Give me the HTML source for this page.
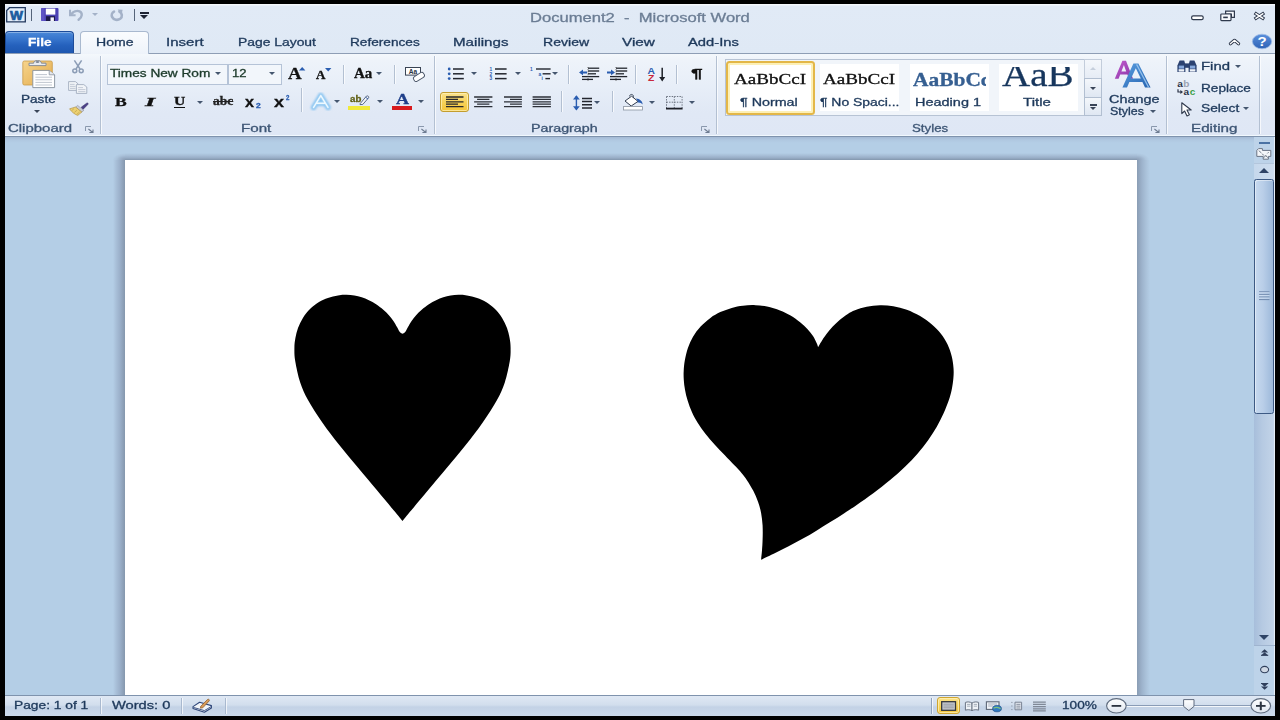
<!DOCTYPE html>
<html><head><meta charset="utf-8"><title>Document2 - Microsoft Word</title>
<style>
html,body{margin:0;padding:0;background:#000;}
body{width:1280px;height:720px;overflow:hidden;position:relative;font-family:"Liberation Sans",sans-serif;}
#win{position:absolute;left:0;top:0;width:1280px;height:720px;background:#dde8f5;overflow:hidden;}
.abs,.t,svg.i{position:absolute;}
svg.i{overflow:visible;}
.t{z-index:5;white-space:nowrap;line-height:1;transform-origin:0 50%;color:#1e395b;font-size:11px;-webkit-text-stroke:.3px currentColor;}
.serif{font-family:"Liberation Serif",serif;}
#titlebar{left:0;top:0;width:1280px;height:54px;background:linear-gradient(#f4f8fc 0,#f4f8fc 5px,#e1eaf6 6px,#dfe9f5 54px);}
#ribbon{left:0;top:53px;width:1280px;height:83px;background:linear-gradient(#f4f8fc 0,#eef3fa 8%,#e7eef8 40%,#e0e8f5 72%,#dfe7f5 100%);border-top:1px solid #8e9eb5;box-sizing:border-box;box-shadow:inset 0 -1px 0 #f1f8fe;}
#ribbonline{left:0;top:136px;width:1280px;height:1px;background:#7f93ad;}
#doc{left:0;top:137px;width:1280px;height:558px;background:linear-gradient(#a4b9d4 0,#b0c8e1 3px,#b4cee6 6px);}
#page{left:125px;top:160px;width:1012.3px;height:540px;background:#fff;}
.shl{left:112.5px;top:160px;width:12.5px;height:535px;background:linear-gradient(90deg,#b4cee6 0,#a9c0d9 25%,#9bb0ca 58%,#8597ad 100%);}
.shr{left:1137.3px;top:160px;width:12.5px;height:535px;background:linear-gradient(270deg,#b4cee6 0,#aac2da 30%,#9db3cc 62%,#8a9db4 100%);}
.sht{left:125px;top:153px;width:1012.3px;height:7px;background:linear-gradient(180deg,#b4cee6 0,#a7bed7 35%,#98adc6 70%,#8397ad 100%);}
.shc1{left:112.5px;top:153px;width:12.5px;height:7px;background:radial-gradient(ellipse 12.5px 7px at 100% 100%,#8a9db4 0,#9db2cb 40%,#acc4dc 70%,#b4cee6 100%);}
.shc2{left:1137.3px;top:153px;width:12.5px;height:7px;background:radial-gradient(ellipse 12.5px 7px at 0 100%,#8a9db4 0,#9db2cb 40%,#acc4dc 70%,#b4cee6 100%);}
#status{left:0;top:695px;width:1280px;height:21px;background:linear-gradient(#dfe8f4 0,#d2deed 45%,#c3d2e6 55%,#cbd9ea 100%);border-top:1px solid #7f93ad;box-sizing:border-box;}
.vsep{position:absolute;width:1px;background:#b3c0d2;box-shadow:1px 0 0 rgba(255,255,255,.7);}
.arr{position:absolute;width:0;height:0;border-left:3.3px solid transparent;border-right:3.3px solid transparent;border-top:3.3px solid #45566f;margin-left:-.3px;}
.bk{position:absolute;background:#000;}
</style></head><body>
<div id="win">
<div class="abs" id="titlebar"></div>
<!-- File tab -->
<div class="abs" style="left:5px;top:31px;width:69px;height:23px;border-radius:4px 4px 0 0;background:linear-gradient(#4a88d8 0,#3573cb 35%,#2561bd 60%,#1d56ae 100%);border:1px solid #1c4c9a;border-bottom:none;box-sizing:border-box;box-shadow:inset 0 1px 0 rgba(255,255,255,.35)"></div>
<!-- Home tab -->
<div class="abs" style="left:80px;top:31px;width:69px;height:23px;border-radius:4px 4px 0 0;background:linear-gradient(#fafcfe,#eef3fa);border:1px solid #a9b9cf;border-bottom:none;box-sizing:border-box;z-index:2"></div>
<!-- QAT: Word icon -->
<svg class="i" style="left:6px;top:6.5px" width="20" height="15.5" viewBox="0 0 20 15.5">
<path d="M3.5 .7H19.3V14.8H.7V3.5Z" fill="#e4eefa" stroke="#22395e" stroke-width="1.3"/>
<text x="10.4" y="12.6" font-family="Liberation Sans" font-weight="bold" font-size="12.5" text-anchor="middle" fill="#1c5c9e" stroke="#1c5c9e" stroke-width=".7" transform="translate(10.4 0) scale(1.1 1) translate(-10.4 0)">W</text>
</svg>
<div class="abs" style="left:31px;top:9px;width:1px;height:12px;background:#55647a"></div>
<!-- Save -->
<svg class="i" style="left:41px;top:8px" width="17.5" height="13" viewBox="0 0 17.5 13">
<rect x="0" y="0" width="17.5" height="13" rx="1" fill="#4d42b4"/>
<rect x="0" y="0" width="3.5" height="13" fill="#6a5fd0" opacity=".6"/>
<rect x="4.8" y=".6" width="9.5" height="6" fill="#fff"/>
<rect x="5" y="8.2" width="9" height="4.8" fill="#1d1a4a"/>
<rect x="9.5" y="9.4" width="3.4" height="3.6" fill="#f4f4fa"/>
</svg>
<!-- Undo (disabled) -->
<svg class="i" style="left:69px;top:8.5px" width="15" height="12" viewBox="0 0 15 12">
<path d="M1 .8V6.2H6.6" fill="none" stroke="#a4b2c8" stroke-width="2"/>
<path d="M2 5.4C4.2 2.6 7.8 1.2 10.6 2.4C13.6 3.8 13.6 8 9.6 10.8" fill="none" stroke="#a4b2c8" stroke-width="2.4" stroke-linecap="round"/>
</svg>
<div class="arr" style="left:92px;top:13px;border-top-color:#a4b2c8"></div>
<!-- Redo (disabled) -->
<svg class="i" style="left:109px;top:8.5px" width="16" height="12" viewBox="0 0 16 12">
<path d="M10.4 2.6C13.2 4 13.8 7.8 11.2 9.8C8.6 11.6 4.6 11 3.2 8.2C2.2 6 3 3.6 5 2.6" fill="none" stroke="#a4b2c8" stroke-width="2.6" stroke-linecap="round"/>
<path d="M8.6 .4L13.6 .8L12.6 5.4Z" fill="#a4b2c8"/>
</svg>
<div class="abs" style="left:134px;top:9px;width:1px;height:12px;background:#55647a"></div>
<!-- Customize QAT -->
<div class="abs" style="left:140px;top:12px;width:9px;height:1.6px;background:#1d2333"></div>
<div class="abs" style="left:140px;top:14.6px;width:0;height:0;border-left:4.5px solid transparent;border-right:4.5px solid transparent;border-top:4px solid #1d2333"></div>
<!-- Window controls -->
<svg class="i" style="left:1190px;top:10px" width="80" height="12" viewBox="0 0 80 12">
<rect x="1.6" y="5.8" width="11.6" height="3.8" rx="1.6" fill="#fff" stroke="#2f394c" stroke-width="1.2"/>
<g fill="#f7f9fc" stroke="#2f394c" stroke-width="1.2">
<path d="M35.6 1.2H44.4V7.4H41.4V4H35.6Z"/>
<rect x="30.8" y="4" width="10.2" height="6.6" rx=".8"/>
<rect x="33.2" y="6.6" width="4.6" height="1.6" fill="#2f394c" stroke="none"/>
</g>
<path d="M64.6 2.9L74.2 9.1M74.2 2.9L64.6 9.1" stroke="#2f394c" stroke-width="3.5" fill="none"/><path d="M65.4 3.4L73.4 8.6M73.4 3.4L65.4 8.6" stroke="#fff" stroke-width="1.5" fill="none"/>
</svg>
<!-- collapse ribbon chevron -->
<svg class="i" style="left:1228px;top:38px" width="13" height="8" viewBox="0 0 13 8">
<path d="M2.4 5.8L6.5 2.3L10.6 5.8" stroke="#2f394c" stroke-width="3.2" stroke-linecap="round" stroke-linejoin="round" fill="none"/><path d="M2.4 5.8L6.5 2.3L10.6 5.8" stroke="#fff" stroke-width="1.3" stroke-linecap="round" stroke-linejoin="round" fill="none"/>
</svg>
<!-- help -->
<svg class="i" style="left:1251.5px;top:34px" width="20" height="15" viewBox="0 0 20 15">
<defs><linearGradient id="hg" x1="0" y1="0" x2="0" y2="1"><stop offset="0" stop-color="#5a90dc"/><stop offset="1" stop-color="#2d62b6"/></linearGradient></defs>
<ellipse cx="10" cy="7.5" rx="9.6" ry="7.3" fill="url(#hg)" stroke="#9fbde6" stroke-width=".8"/>
<text x="10" y="12" font-family="Liberation Sans" font-weight="bold" font-size="12.5" text-anchor="middle" fill="#fff" transform="translate(10 0) scale(1.2 1) translate(-10 0)">?</text>
</svg>

<div class="abs" id="ribbon"></div>
<div class="abs" id="ribbonline"></div>
<div class="abs" id="doc"></div>
<div class="abs shl"></div><div class="abs shr"></div><div class="abs sht"></div><div class="abs shc1"></div><div class="abs shc2"></div>
<div class="abs" id="page"></div>
<svg class="i" style="left:0;top:0" width="1280" height="720" viewBox="0 0 1280 720">
<path fill="#000" d="M402.5 521.0 C400.7 518.8 396.0 513.0 391.7 507.9 C387.4 502.7 382.4 496.7 376.8 490.0 C371.2 483.3 364.1 475.1 357.9 467.6 C351.6 460.1 345.2 452.5 339.3 445.0 C333.4 437.5 327.5 430.0 322.3 422.5 C317.1 415.1 311.7 406.8 308.0 400.1 C304.4 393.4 302.4 388.9 300.2 382.4 C298.1 375.9 296.2 366.8 295.2 361.0 C294.2 355.3 294.4 351.9 294.4 348.0 C294.4 344.2 294.8 341.3 295.4 338.0 C296.0 334.6 296.8 331.3 298.0 328.0 C299.3 324.6 300.9 321.1 302.9 317.9 C304.9 314.8 307.3 311.7 310.0 309.0 C312.7 306.4 316.0 303.9 319.0 302.0 C322.0 300.2 324.8 299.0 327.9 297.9 C331.1 296.8 334.9 295.9 338.0 295.4 C341.1 294.9 343.8 294.8 346.5 294.8 C349.2 294.8 351.9 295.1 354.4 295.5 C356.9 295.9 359.3 296.6 361.7 297.3 C364.1 298.1 366.5 299.1 368.9 300.2 C371.3 301.4 373.7 302.6 376.1 304.2 C378.5 305.8 381.2 307.8 383.3 309.7 C385.5 311.5 387.4 313.5 389.1 315.4 C390.8 317.3 392.1 319.0 393.4 320.9 C394.7 322.8 396.0 325.3 397.0 327.0 C398.0 328.7 398.8 330.6 399.2 331.3 Q402.5 336 405.8 331.3 C406.2 330.6 407.0 328.7 408.0 327.0 C409.0 325.3 410.3 322.8 411.6 320.9 C412.9 319.0 414.2 317.3 415.9 315.4 C417.6 313.5 419.5 311.5 421.7 309.7 C423.8 307.8 426.5 305.8 428.9 304.2 C431.3 302.6 433.7 301.4 436.1 300.2 C438.5 299.1 440.9 298.1 443.3 297.3 C445.7 296.6 448.1 295.9 450.6 295.5 C453.1 295.1 455.8 294.8 458.5 294.8 C461.2 294.8 463.9 294.9 467.0 295.4 C470.1 295.9 473.9 296.8 477.1 297.9 C480.2 299.0 483.0 300.2 486.0 302.0 C489.0 303.9 492.3 306.4 495.0 309.0 C497.7 311.7 500.1 314.8 502.1 317.9 C504.1 321.1 505.7 324.6 507.0 328.0 C508.2 331.3 509.0 334.6 509.6 338.0 C510.2 341.3 510.6 344.2 510.6 348.0 C510.6 351.9 510.8 355.3 509.8 361.0 C508.8 366.8 506.9 375.9 504.8 382.4 C502.6 388.9 500.6 393.4 497.0 400.1 C493.3 406.8 487.9 415.1 482.7 422.5 C477.5 430.0 471.6 437.5 465.7 445.0 C459.8 452.5 453.4 460.1 447.1 467.6 C440.9 475.1 433.8 483.3 428.2 490.0 C422.6 496.7 417.6 502.7 413.3 507.9 C409.0 513.0 404.3 518.8 402.5 521.0Z"/>
<path fill="#000" d="M761.1 559.8 C761.2 558.3 761.7 554.0 762.0 550.6 C762.2 547.2 762.5 543.6 762.6 539.4 C762.8 535.2 762.8 530.0 762.6 525.6 C762.3 521.2 761.8 516.9 761.1 513.0 C760.4 509.1 759.4 505.7 758.1 502.0 C756.8 498.3 755.1 494.4 753.3 490.8 C751.4 487.2 749.0 483.3 747.1 480.4 C745.1 477.4 743.6 475.6 741.5 473.0 C739.4 470.5 737.3 468.3 734.4 465.3 C731.6 462.3 727.8 458.5 724.6 455.0 C721.3 451.6 718.0 448.3 714.8 444.7 C711.6 441.1 708.1 437.2 705.2 433.4 C702.4 429.7 699.7 426.0 697.5 422.4 C695.2 418.9 693.5 415.6 691.9 412.0 C690.3 408.5 688.8 404.6 687.7 400.8 C686.5 397.1 685.6 393.2 685.0 389.7 C684.3 386.2 684.0 383.1 683.8 380.0 C683.6 376.9 683.5 374.2 683.7 371.0 C683.9 367.7 684.1 364.3 684.8 360.4 C685.5 356.6 686.6 351.9 687.9 347.9 C689.3 344.0 690.9 340.3 693.0 336.7 C695.1 333.2 697.5 329.8 700.4 326.7 C703.3 323.6 707.1 320.4 710.4 317.9 C713.7 315.5 716.8 313.8 720.3 312.1 C723.9 310.4 727.9 309.0 731.7 307.9 C735.5 306.8 739.0 306.1 743.0 305.7 C746.9 305.2 751.5 305.0 755.5 305.2 C759.5 305.4 762.9 305.7 767.0 306.6 C771.1 307.5 776.2 309.0 780.0 310.5 C783.8 311.9 786.7 313.4 790.1 315.3 C793.4 317.3 797.2 319.9 800.1 322.2 C803.0 324.5 805.5 326.8 807.6 329.2 C809.8 331.5 811.5 333.8 813.0 336.1 C814.5 338.5 815.8 341.2 816.6 343.1 C817.5 344.9 817.9 346.6 818.1 347.3 C818.6 346.4 819.9 343.9 821.3 341.8 C822.6 339.6 824.4 336.8 826.3 334.3 C828.2 331.8 830.2 329.2 832.5 326.8 C834.8 324.4 837.4 321.9 839.9 319.8 C842.5 317.7 845.3 315.6 847.8 314.0 C850.4 312.4 851.9 311.5 855.0 310.3 C858.2 309.1 862.6 307.6 866.7 306.8 C870.9 305.9 875.6 305.3 880.0 305.2 C884.4 305.1 888.9 305.4 893.3 306.2 C897.8 306.9 902.3 308.2 906.8 309.8 C911.2 311.5 915.9 313.7 920.1 316.1 C924.3 318.6 928.5 321.5 931.9 324.5 C935.4 327.4 938.2 330.4 940.9 333.8 C943.5 337.1 945.8 340.9 947.6 344.6 C949.4 348.4 950.7 352.4 951.7 356.3 C952.7 360.1 953.2 364.3 953.5 368.0 C953.8 371.6 953.7 374.4 953.4 378.0 C953.1 381.6 952.5 385.9 951.7 389.7 C950.9 393.5 950.1 396.6 948.7 400.6 C947.3 404.5 945.5 409.2 943.5 413.6 C941.5 418.0 939.3 422.4 936.8 426.8 C934.2 431.2 931.5 435.5 928.3 440.0 C925.1 444.4 921.5 449.0 917.7 453.4 C913.8 457.9 909.6 462.3 905.0 466.7 C900.4 471.2 895.4 475.7 890.1 480.1 C884.8 484.5 878.9 489.1 873.3 493.3 C867.7 497.4 861.5 501.7 856.7 505.0 C851.9 508.3 848.7 510.4 844.3 513.2 C839.9 516.1 835.0 519.2 830.3 522.1 C825.7 525.0 821.0 527.9 816.4 530.7 C811.8 533.5 807.2 536.2 802.5 538.8 C797.9 541.4 793.2 543.9 788.6 546.3 C783.9 548.8 779.3 551.1 774.7 553.3 C770.1 555.5 763.4 558.7 761.1 559.8Z"/>
</svg>

<!-- vertical scrollbar column -->
<div class="abs" style="left:1254px;top:137px;width:21px;height:558px;background:#bdd3e9"></div>
<div class="abs" style="left:1259px;top:142px;width:10.6px;height:1.8px;background:#4a72a4"></div>
<!-- view ruler icon -->
<svg class="i" style="left:1256px;top:147.5px" width="15.5" height="12" viewBox="0 0 15.5 12">
<path d="M.8 2.4L2.6 .6H6.4V2.4H14.8V8.4H12.4V11.2H7.2V8.4H.8Z" fill="#f4f6f9" stroke="#6a7484" stroke-width="1"/>
<path d="M3 2.6L5 4.8M6 5.6L8 7.6M8 9.6L9.8 7.4L11.6 9.6M11.4 5.4L12.6 4.2" fill="none" stroke="#5a6474" stroke-width=".9"/>
</svg>
<!-- up button -->
<div class="abs" style="left:1254px;top:162.5px;width:21px;height:16px;background:linear-gradient(90deg,#c6d8ec,#cfdeef);border-top:1px solid #b3c6dc;box-sizing:border-box"></div>
<div class="abs" style="left:1259px;top:167.8px;width:0;height:0;border-left:5.5px solid transparent;border-right:5.5px solid transparent;border-bottom:5px solid #2f4466"></div>
<!-- track -->
<div class="abs" style="left:1254px;top:178.5px;width:20.6px;height:467px;background:linear-gradient(90deg,#a7bedb 0,#b6cae2 40%,#c4d5e9 100%)"></div>
<div class="abs" style="left:1274.4px;top:137px;width:.8px;height:558px;background:#e6eef8"></div>
<!-- thumb -->
<div class="abs" style="left:1254.2px;top:179px;width:19.6px;height:234.8px;border:1.2px solid #3d5a84;border-radius:2.5px;box-sizing:border-box;background:linear-gradient(90deg,#c6d9ef 0,#b9cee8 45%,#9cb8da 100%);box-shadow:inset 1px 1px 0 rgba(255,255,255,.45)"></div>
<svg class="i" style="left:1259px;top:290.5px" width="10.5" height="9.5" viewBox="0 0 10.5 9.5"><g stroke="#6f88ad" stroke-width="1"><path d="M0 .8H10.5M0 3.4H10.5M0 6H10.5M0 8.6H10.5"/></g><g stroke="#dce8f6" stroke-width=".6"><path d="M0 1.8H10.5M0 4.4H10.5M0 7H10.5"/></g></svg>
<!-- down button -->
<div class="abs" style="left:1254px;top:644.5px;width:21px;height:1px;background:#9fb4cf"></div>
<div class="abs" style="left:1259px;top:635px;width:0;height:0;border-left:5.5px solid transparent;border-right:5.5px solid transparent;border-top:5.2px solid #2f4466"></div>
<!-- browse buttons -->
<svg class="i" style="left:1260px;top:648px" width="10" height="42" viewBox="0 0 10 42">
<g fill="#2f3f5c"><path d="M1 4.6L4.6 1.2L8.2 4.6Z"/><path d="M1 7.6L4.6 4.2L8.2 7.6Z"/><rect x="1" y="6.8" width="7.2" height="1"/>
<path d="M1 35.4L4.6 38.8L8.2 35.4Z"/><path d="M1 38.4L4.6 41.8L8.2 38.4Z"/><rect x="1" y="35" width="7.2" height="1"/></g>
<ellipse cx="4.6" cy="21.6" rx="4" ry="3.2" fill="#cfd8e4" stroke="#2f3f5c" stroke-width="1.1"/>
</svg>

<div class="abs" id="status"></div>
<!-- group separators -->
<div class="vsep" style="left:99.5px;top:56px;height:78px"></div>
<div class="vsep" style="left:433.5px;top:56px;height:78px"></div>
<div class="vsep" style="left:716px;top:56px;height:78px"></div>
<div class="vsep" style="left:1166px;top:56px;height:78px"></div>
<div class="vsep" style="left:1258.5px;top:56px;height:78px"></div>
<!-- ===== Clipboard ===== -->
<svg class="i" style="left:22px;top:58px" width="34" height="31" viewBox="0 0 34 31">
<defs><linearGradient id="pb" x1="0" y1="0" x2="1" y2="1"><stop offset="0" stop-color="#f6d48c"/><stop offset="1" stop-color="#e3ab4c"/></linearGradient></defs>
<rect x=".8" y="3" width="29.5" height="24" rx="1.5" fill="url(#pb)" stroke="#c99a48" stroke-width=".8"/>
<path d="M7 7.6V5.2H11.6C11.6 1.6 19.4 1.6 19.4 5.2H24V7.6Z" fill="#e8ebf0" stroke="#7d8694" stroke-width=".9"/>
<ellipse cx="15.5" cy="4" rx="1.8" ry="1" fill="#7d8694"/>
<path d="M10.8 12.4H27.2L32.6 16.8V29.6H10.8Z" fill="#fff" stroke="#858e9c" stroke-width=".9"/>
<path d="M27.2 12.4V16.8H32.6" fill="#e4e8ee" stroke="#858e9c" stroke-width=".8"/>
<g stroke="#b9c0ca" stroke-width=".9"><path d="M13.4 16.6H25"/><path d="M13.4 19.2H30"/><path d="M13.4 21.8H30"/><path d="M13.4 24.4H30"/><path d="M13.4 27H30"/></g>
</svg>
<div class="arr" style="left:34.6px;top:110.2px;border-top-color:#3a4558"></div>
<!-- cut -->
<svg class="i" style="left:72px;top:59.5px" width="12" height="13.5" viewBox="0 0 12 13.5">
<g fill="none" stroke="#8c9db6" stroke-width="1.5"><path d="M2.4 .4L8 9"/><path d="M9.6 .4L4 9"/><ellipse cx="2.8" cy="10.8" rx="2" ry="1.9"/><ellipse cx="9.2" cy="10.8" rx="2" ry="1.9"/></g>
</svg>
<!-- copy -->
<svg class="i" style="left:68px;top:81px" width="19.5" height="13" viewBox="0 0 19.5 13">
<g fill="#f1f4f8" stroke="#a3aebf" stroke-width=".9"><path d="M.6 .6H7.4L10 2.8V9.4H.6Z"/><path d="M8.4 3.6H15.8L18.8 6V12.4H8.4Z"/></g>
<g stroke="#b7c0ce" stroke-width=".8"><path d="M2 3.4H6.6"/><path d="M2 5.4H7.6"/><path d="M2 7.4H7.6"/><path d="M10.2 6.6H15"/><path d="M10.2 8.6H17.4"/><path d="M10.2 10.6H17.4"/></g>
</svg>
<!-- format painter -->
<svg class="i" style="left:68.5px;top:102px" width="20" height="14" viewBox="0 0 20 14">
<path d="M12.2 5.2L17.6 1.2C18.8 .4 19.8 1.6 18.8 2.6L14 7.4Z" fill="#4a3f86" stroke="#352c66" stroke-width=".5"/>
<path d="M8.6 3.4L14.8 8.4L12.6 10.2L6.4 5.4Z" fill="#c9ccd6" stroke="#7c8290" stroke-width=".5"/>
<path d="M6.6 5L12.8 10L8.8 13.4C6 12.6 2.4 9.8 .6 6.8Z" fill="#ecd070" stroke="#a8883a" stroke-width=".6"/>
<path d="M3 8.4L5 6.6M5.4 10.4L8 8.2M8 12.2L10.6 10" stroke="#b89a44" stroke-width=".6"/>
</svg>
<!-- launcher icons -->
<svg class="i" style="left:84.5px;top:125.5px" width="9" height="7" viewBox="0 0 9 7"><path d="M.5 5V.5H6" fill="none" stroke="#8a98ad" stroke-width="1"/><path d="M3.4 3L7.6 6.2M8 3.4V6.5H4.4" fill="none" stroke="#6e7c92" stroke-width="1.1"/></svg>
<svg class="i" style="left:417.5px;top:125.5px" width="9" height="7" viewBox="0 0 9 7"><path d="M.5 5V.5H6" fill="none" stroke="#8a98ad" stroke-width="1"/><path d="M3.4 3L7.6 6.2M8 3.4V6.5H4.4" fill="none" stroke="#6e7c92" stroke-width="1.1"/></svg>
<svg class="i" style="left:700.5px;top:125.5px" width="9" height="7" viewBox="0 0 9 7"><path d="M.5 5V.5H6" fill="none" stroke="#8a98ad" stroke-width="1"/><path d="M3.4 3L7.6 6.2M8 3.4V6.5H4.4" fill="none" stroke="#6e7c92" stroke-width="1.1"/></svg>
<svg class="i" style="left:1150.5px;top:125.5px" width="9" height="7" viewBox="0 0 9 7"><path d="M.5 5V.5H6" fill="none" stroke="#8a98ad" stroke-width="1"/><path d="M3.4 3L7.6 6.2M8 3.4V6.5H4.4" fill="none" stroke="#6e7c92" stroke-width="1.1"/></svg>
<!-- ===== Font ===== -->
<div class="abs" style="left:107px;top:64px;width:120.5px;height:20.5px;background:#f2f6fb;border:1px solid #b5c3d7;box-sizing:border-box"></div>
<div class="abs" style="left:228px;top:64px;width:53.5px;height:20.5px;background:#f2f6fb;border:1px solid #b5c3d7;box-sizing:border-box"></div>
<div class="arr" style="left:215.5px;top:72.3px"></div>
<div class="arr" style="left:269.3px;top:72.3px"></div>
<!-- grow / shrink arrows -->
<svg class="i" style="left:299.2px;top:67.2px" width="6.4" height="3.4" viewBox="0 0 6.4 3.4"><path d="M0 3.4L3.2 0L6.4 3.4Z" fill="#2a5db0"/></svg>
<svg class="i" style="left:325.2px;top:67.8px" width="6.4" height="3.4" viewBox="0 0 6.4 3.4"><path d="M0 0L3.2 3.4L6.4 0Z" fill="#2a5db0"/></svg>
<div class="vsep" style="left:342.5px;top:65px;height:19px"></div>
<div class="arr" style="left:376.2px;top:72.3px"></div>
<div class="vsep" style="left:393.5px;top:65px;height:19px"></div>
<!-- clear formatting -->
<svg class="i" style="left:404.5px;top:66.5px" width="20" height="15" viewBox="0 0 20 15">
<rect x=".5" y=".5" width="15" height="7.6" fill="#fff" stroke="#3a4454" stroke-width="1"/>
<text x="8" y="6.8" font-family="Liberation Sans" font-weight="bold" font-size="6.6" text-anchor="middle" fill="#2a3344">Aa</text>
<rect x="8.2" y="7.2" width="11.6" height="5.4" rx="2.2" fill="#fff" stroke="#4a5568" stroke-width=".9" transform="rotate(-32 14 10)"/>
</svg>
<!-- row 2 -->
<div class="abs" style="left:173.5px;top:107px;width:11.8px;height:1px;background:#111"></div>
<div class="arr" style="left:197.2px;top:100.6px"></div>
<div class="vsep" style="left:300.5px;top:88px;height:24px"></div>
<!-- text effects A -->
<svg class="i" style="left:309px;top:92px" width="24" height="20" viewBox="0 0 24 20">
<defs><filter id="gl" x="-30%" y="-30%" width="160%" height="160%"><feGaussianBlur stdDeviation="1"/></filter></defs>
<path d="M4.6 15.4L11.8 3.6L19 15.4M7.4 11.2H16.2" fill="none" stroke="#86c2f0" stroke-width="5.4" stroke-linejoin="round" stroke-linecap="round" filter="url(#gl)"/>
<path d="M4.6 15.4L11.8 3.6L19 15.4M7.4 11.2H16.2" fill="none" stroke="#9fd0f4" stroke-width="3.6" stroke-linejoin="round" stroke-linecap="round"/>
<path d="M4.6 15.4L11.8 3.6L19 15.4M7.4 11.2H16.2" fill="none" stroke="#eef9ff" stroke-width="1.5" stroke-linejoin="round" stroke-linecap="round"/>
</svg>
<div class="arr" style="left:334.2px;top:100.4px"></div>
<!-- highlight -->
<div class="abs" style="left:348.3px;top:105.8px;width:21.3px;height:4.6px;background:#f1ea3a"></div>
<svg class="i" style="left:359px;top:95px" width="11" height="10" viewBox="0 0 11 10">
<path d="M1.2 8.6L7.4 1.2C8.4 .2 10.4 1.6 9.6 2.8L3.8 9.4L1 9.6Z" fill="#f2f5fa" stroke="#4a5a78" stroke-width=".9"/>
<path d="M6.6 2.2L9 4" stroke="#3a62a8" stroke-width="1"/>
</svg>
<div class="arr" style="left:377.2px;top:100.4px"></div>
<!-- font color -->
<div class="abs" style="left:391.8px;top:105.8px;width:20px;height:4px;background:#d81a1e"></div>
<div class="arr" style="left:418.2px;top:100.4px"></div>
<!-- ===== Paragraph ===== -->
<!-- bullets -->
<svg class="i" style="left:446.5px;top:67px" width="17.5" height="14" viewBox="0 0 17.5 14">
<g fill="#2a5db0"><circle cx="2.2" cy="2" r="1.4"/><circle cx="2.2" cy="6.8" r="1.4"/><circle cx="2.2" cy="11.6" r="1.4"/></g>
<g stroke="#23262e" stroke-width="1.5"><path d="M6 2H16.8"/><path d="M6 6.8H16.8"/><path d="M6 11.6H16.8"/></g>
</svg>
<div class="arr" style="left:471.6px;top:72.3px"></div>
<!-- numbering -->
<svg class="i" style="left:488.5px;top:67px" width="18" height="14" viewBox="0 0 18 14">
<g font-family="Liberation Sans" font-weight="bold" font-size="4.8" fill="#2a5db0"><text x=".4" y="3.8">1</text><text x=".4" y="8.6">2</text><text x=".4" y="13.4">3</text></g>
<g stroke="#23262e" stroke-width="1.5"><path d="M6 2H17.6"/><path d="M6 6.8H17.6"/><path d="M6 11.6H17.6"/></g>
</svg>
<div class="arr" style="left:515px;top:72.3px"></div>
<!-- multilevel -->
<svg class="i" style="left:529.5px;top:67px" width="21" height="14" viewBox="0 0 21 14">
<g font-family="Liberation Sans" font-weight="bold" font-size="4.8" fill="#2a5db0"><text x="0" y="3.8">1</text><text x="8.4" y="8.6">a</text><text x="11.4" y="13.4">i</text></g>
<g stroke="#23262e" stroke-width="1.4"><path d="M6 2H20.6"/><path d="M12.6 6.8H20.6"/><path d="M15.4 11.6H20"/></g>
</svg>
<div class="arr" style="left:552.2px;top:72.3px"></div>
<div class="vsep" style="left:568.4px;top:65px;height:19px"></div>
<!-- decrease indent -->
<svg class="i" style="left:579px;top:67px" width="20.5" height="14" viewBox="0 0 20.5 14">
<g stroke="#23262e" stroke-width="1.3"><path d="M9 1.2H20.2"/><path d="M9 4H20.2" stroke="#55595f" stroke-width="1.8"/><path d="M9 6.8H17"/><path d="M3 9.6H20.2"/><path d="M3 12.4H14"/></g>
<path d="M9 0V14" stroke="#444" stroke-width=".8" stroke-dasharray="1 1.2"/>
<path d="M0 5.4L4 2.6V4.4H8V6.4H4V8.2Z" fill="#2a5db0"/>
</svg>
<!-- increase indent -->
<svg class="i" style="left:606.5px;top:67px" width="20.5" height="14" viewBox="0 0 20.5 14">
<g stroke="#23262e" stroke-width="1.3"><path d="M9 1.2H20.2"/><path d="M9 4H20.2" stroke="#55595f" stroke-width="1.8"/><path d="M9 6.8H17"/><path d="M3 9.6H20.2"/><path d="M3 12.4H14"/></g>
<path d="M9 0V14" stroke="#444" stroke-width=".8" stroke-dasharray="1 1.2"/>
<path d="M8 5.4L4 2.6V4.4H0V6.4H4V8.2Z" fill="#2a5db0"/>
</svg>
<div class="vsep" style="left:635.3px;top:65px;height:19px"></div>
<!-- sort -->
<svg class="i" style="left:646.5px;top:66.5px" width="19" height="15" viewBox="0 0 19 15">
<text x="4.2" y="6.8" font-family="Liberation Sans" font-weight="bold" font-size="9" text-anchor="middle" fill="#2a5db0" transform="translate(4.2 0) scale(1.15 1) translate(-4.2 0)">A</text>
<text x="4.2" y="14.4" font-family="Liberation Sans" font-weight="bold" font-size="9" text-anchor="middle" fill="#c8283c" transform="translate(4.2 0) scale(1.15 1) translate(-4.2 0)">Z</text>
<path d="M15.2 .8V12" stroke="#1d2028" stroke-width="1.5"/><path d="M12.2 10L15.2 14.4L18.2 10Z" fill="#1d2028"/>
</svg>
<div class="vsep" style="left:676.2px;top:65px;height:19px"></div>
<!-- align left active -->
<div class="abs" style="left:440px;top:91.6px;width:28.6px;height:20.8px;border-radius:3px;background:linear-gradient(#fbe38c,#f7d155 55%,#f4c63a);border:1px solid #c39d2e;box-sizing:border-box;box-shadow:inset 0 0 0 1px rgba(255,244,190,.7)"></div>
<svg class="i" style="left:446.4px;top:96px" width="106" height="12" viewBox="0 0 106 12">
<g stroke="#2a2a2a" stroke-width="1.3">
<path d="M0 1H17.5M0 3.4H12M0 5.8H17.5M0 8.2H12M0 10.6H17.5"/>
</g>
<g stroke="#2c3038" stroke-width="1.3">
<path d="M28.1 1H46.4M31.1 3.4H43.4M28.1 5.8H46.4M31.1 8.2H43.4M28.1 10.6H46.4"/>
<path d="M58 1H75.9M64 3.4H75.9M58 5.8H75.9M64 8.2H75.9M58 10.6H75.9"/>
<path d="M86.6 1H104.9M86.6 3.4H104.9M86.6 5.8H104.9M86.6 8.2H104.9M86.6 10.6H104.9"/>
</g>
</svg>
<div class="vsep" style="left:561.2px;top:91px;height:21px"></div>
<!-- line spacing -->
<svg class="i" style="left:572.5px;top:94.5px" width="19.5" height="15.5" viewBox="0 0 19.5 15.5">
<path d="M3.4 1V14.4" stroke="#2a5db0" stroke-width="1.4"/><path d="M0 4.4L3.4 .2L6.8 4.4Z" fill="#2a5db0"/><path d="M0 11.2L3.4 15.4L6.8 11.2Z" fill="#2a5db0"/>
<g stroke="#23262e" stroke-width="1.5"><path d="M9 3.4H19M9 6.6H19M9 9.8H19M9 13H19"/></g>
</svg>
<div class="arr" style="left:594.3px;top:100.5px"></div>
<div class="vsep" style="left:612px;top:91px;height:21px"></div>
<!-- shading -->
<svg class="i" style="left:623px;top:94px" width="20.5" height="16.5" viewBox="0 0 20.5 16.5">
<path d="M6.6 2.4C6.6 -.2 10.4 -.2 10.4 2.4V5" fill="none" stroke="#3a4558" stroke-width="1"/>
<path d="M8.6 2.2L15 7.4L8.2 12L2 7Z" fill="#fff" stroke="#2f3a4c" stroke-width="1"/>
<path d="M13 4.6C17 4.8 19.6 7.4 19.6 10.6C18.4 9 16.4 8.2 14.4 8.8L15 7.4Z" fill="#2a5db0"/>
<rect x=".4" y="12.6" width="19" height="3.4" fill="#fff" stroke="#8a93a0" stroke-width=".8"/>
</svg>
<div class="arr" style="left:649.4px;top:100.5px"></div>
<!-- borders -->
<svg class="i" style="left:665.8px;top:95.6px" width="16.6" height="13.6" viewBox="0 0 16.6 13.6">
<g stroke="#6a7280" stroke-width="1" stroke-dasharray="1.4 1.2" fill="none"><path d="M.5 .5H16.1"/><path d="M.5 .5V12"/><path d="M16.1 .5V12"/><path d="M8.3 .5V12"/><path d="M.5 6.2H16.1"/></g>
<path d="M0 12.6H16.6" stroke="#1d2028" stroke-width="1.8"/>
</svg>
<div class="arr" style="left:689.5px;top:100.5px"></div>
<!-- ===== Styles ===== -->
<div class="abs" style="left:724.5px;top:59px;width:360.5px;height:57.4px;background:#f1f5fa;border:1px solid #b7c3d4;box-sizing:border-box"></div>
<div class="abs" style="left:726.2px;top:61px;width:88.6px;height:53.6px;background:#fff;border:2px solid #e3b748;border-radius:3.5px;box-sizing:border-box;box-shadow:inset 0 0 0 2px #fdf0b6"></div>
<div class="abs" style="left:820px;top:64.2px;width:79px;height:46.6px;background:#fff"></div>
<div class="abs" style="left:909.5px;top:64.2px;width:79px;height:46.6px;background:#fff"></div>
<div class="abs" style="left:999px;top:64.2px;width:79px;height:46.6px;background:#fff"></div>
<!-- gallery scroll buttons -->
<div class="abs" style="left:1084px;top:59px;width:18px;height:19.6px;background:linear-gradient(#f4f7fb,#e6ecf5);border:1px solid #c3cddb;box-sizing:border-box"></div>
<div class="abs" style="left:1084px;top:78.2px;width:18px;height:19.6px;background:linear-gradient(#f4f7fb,#dfe7f2);border:1px solid #b2bfd1;box-sizing:border-box"></div>
<div class="abs" style="left:1084px;top:97.4px;width:18px;height:19px;background:linear-gradient(#f4f7fb,#dfe7f2);border:1px solid #b2bfd1;box-sizing:border-box"></div>
<div class="abs" style="left:1090px;top:67.4px;width:0;height:0;border-left:3px solid transparent;border-right:3px solid transparent;border-bottom:3px solid #c6cfdc"></div>
<div class="abs" style="left:1089.6px;top:87px;width:0;height:0;border-left:3.5px solid transparent;border-right:3.5px solid transparent;border-top:3.2px solid #3a4558"></div>
<div class="abs" style="left:1089.6px;top:104.4px;width:7px;height:1.2px;background:#3a4558"></div>
<div class="abs" style="left:1089.6px;top:106.8px;width:0;height:0;border-left:3.5px solid transparent;border-right:3.5px solid transparent;border-top:3.2px solid #3a4558"></div>
<!-- change styles icon -->
<svg class="i" style="left:1114px;top:59.5px" width="38" height="28" viewBox="0 0 38 28">
<defs>
<linearGradient id="cs1" x1="0" y1="0" x2="1" y2="1"><stop offset="0" stop-color="#c45ad0"/><stop offset="1" stop-color="#8636a4"/></linearGradient>
<linearGradient id="cs2" x1="0" y1="0" x2="1" y2="1"><stop offset="0" stop-color="#5a9ee0"/><stop offset="1" stop-color="#2563b0"/></linearGradient>
</defs>
<path d="M.8 18.8L8.4 .8H12L19 18.8H15L13.4 14.6H6.2L4.6 18.8ZM7.4 11.6H12.2L9.9 5Z" fill="url(#cs1)" fill-rule="evenodd"/>
<path d="M8.4 27.4L19.4 3.6H24.4L36.6 27.4H31L28.4 22H15.4L13 27.4ZM17 18.4H26.8L21.8 8.2Z" fill="url(#cs2)" fill-rule="evenodd"/>
<path d="M22.6 4.4L34.6 27.4" stroke="#a9d0f4" stroke-width="1.2" opacity=".8"/>
</svg>
<div class="arr" style="left:1150px;top:110.2px"></div>
<!-- ===== Editing ===== -->
<!-- find binoculars -->
<svg class="i" style="left:1176.5px;top:60px" width="20" height="12.5" viewBox="0 0 20 12.5">
<g fill="#2b4170"><path d="M2.6 .6H7.2L8.4 4.6V12H.4V5.4Z"/><path d="M12.8 .6H17.4L19.6 5.4V12H11.6V4.6Z"/><rect x="8" y="3.4" width="4" height="4.4"/></g>
<g fill="#86a8dc"><rect x="1.8" y="5.6" width="5.2" height="3"/><rect x="13" y="5.6" width="5.2" height="3"/></g>
<g fill="#eef2f8"><rect x="1.6" y="9.2" width="5.6" height="2.4"/><rect x="12.8" y="9.2" width="5.6" height="2.4"/></g>
</svg>
<div class="arr" style="left:1235.3px;top:64.8px"></div>
<!-- replace -->
<svg class="i" style="left:1177px;top:81px" width="20.5" height="14.5" viewBox="0 0 20.5 14.5">
<g font-family="Liberation Sans" font-weight="bold" font-size="8.4">
<text x=".2" y="6.2" fill="#2b3346" transform="scale(1.2 1)">a</text><text x="5.2" y="6.2" fill="#9aa3b2" transform="scale(1.2 1)">b</text>
<text x="5.4" y="13.8" fill="#2b3346" transform="scale(1.2 1)">a</text><text x="10.6" y="13.8" fill="#3aa048" transform="scale(1.2 1)">c</text>
</g>
<path d="M1 8.2V11H4" fill="none" stroke="#2b3346" stroke-width="1.2"/><path d="M3.4 9L6 11L3.4 13Z" fill="#2b3346"/>
</svg>
<!-- select cursor -->
<svg class="i" style="left:1180.5px;top:101.5px" width="12" height="15" viewBox="0 0 12 15">
<path d="M.8 .8V11.6L3.6 9L6 14L8.4 12.8L6 8H10.2Z" fill="#fff" stroke="#2f394c" stroke-width="1.1" stroke-linejoin="round"/>
</svg>
<div class="arr" style="left:1243.5px;top:107.4px"></div>

<div class="vsep" style="left:100px;top:698px;height:16px;background:#a9b9cf"></div>
<div class="vsep" style="left:181px;top:698px;height:16px;background:#a9b9cf"></div>
<div class="vsep" style="left:225px;top:698px;height:16px;background:#a9b9cf"></div>
<div class="vsep" style="left:930.5px;top:698px;height:16px;background:#8fa2bc"></div>
<!-- proofing icon -->
<svg class="i" style="left:192px;top:697.5px" width="21" height="15" viewBox="0 0 21 15">
<path d="M1 8.6L7.6 4.2L19.4 7.6L19.4 10L12.4 14.2L1 10.6Z" fill="#f2f5f9" stroke="#2f477a" stroke-width="1.1" stroke-linejoin="round"/>
<path d="M1.4 9.4L12.4 12.6L19.2 8.6" fill="none" stroke="#2f477a" stroke-width=".9"/>
<path d="M8.8 8.2L15.4 1.6C16.4 .6 18 1.8 17.2 2.9L10.8 9.8L8.4 10.2Z" fill="#d89a58" stroke="#8a5a2a" stroke-width=".7"/>
</svg>
<!-- view buttons -->
<div class="abs" style="left:936.5px;top:697.3px;width:23.5px;height:17px;border-radius:3px;background:linear-gradient(#fbe38c,#f6d25a 55%,#f3c640);border:1px solid #cfa530;box-sizing:border-box;box-shadow:inset 0 0 0 1px rgba(255,244,190,.7)"></div>
<svg class="i" style="left:941px;top:701px" width="106" height="11" viewBox="0 0 106 11">
<rect x=".7" y=".7" width="13.8" height="8.6" fill="#c9ccd2" stroke="#33363c" stroke-width="1.3"/>
<g stroke="#8b9099" stroke-width=".8"><path d="M2.4 3.2H12.8M2.4 5H12.8M2.4 6.8H12.8"/></g>
<!-- reading -->
<g fill="#eef2f7" stroke="#6a7484" stroke-width="1"><path d="M24.4 1.4C26.6 .6 29 .8 31 2V9.6C29 8.6 26.6 8.4 24.4 9.2Z"/><path d="M37.6 1.4C35.4 .6 33 .8 31 2V9.6C33 8.6 35.4 8.4 37.6 9.2Z"/></g>
<g stroke="#8a93a2" stroke-width=".7"><path d="M26 3.4H29.4M26 5.2H29.4M32.8 3.4H36M32.8 5.2H36"/></g>
<!-- web -->
<rect x="45.4" y=".8" width="12.6" height="7.6" fill="#eef2f7" stroke="#5d6777" stroke-width="1.1"/>
<g stroke="#8a93a2" stroke-width=".7"><path d="M47.2 3H56M47.2 5H52"/></g>
<ellipse cx="56" cy="7.6" rx="4.4" ry="3.2" fill="#2f78c0" stroke="#1d4f8a" stroke-width=".7"/><path d="M52.6 7.2C54.4 5.8 57.2 6.4 59.6 7.6" stroke="#7fc27a" stroke-width="1.2" fill="none"/>
<!-- outline -->
<g stroke="#7a8494" stroke-width="1"><path d="M74 1.2H80.6V8.8H74Z" fill="#dfe4ec"/><path d="M70.4 1.4H72M70.4 5H72M70.4 8.6H72" stroke-dasharray="1 1"/><path d="M75.4 3.4H79.4M75.4 5.2H79.4M75.4 7H79.4" stroke-width=".8"/></g>
<!-- draft -->
<g stroke="#7f8896" stroke-width="1.3"><path d="M92 1.2H104.8M92 3.4H104.8M92 5.6H104.8M92 7.8H104.8M92 9.8H104.8"/></g>
</svg>
<!-- zoom slider -->
<div class="abs" style="left:1125px;top:704.6px;width:126px;height:1px;background:#8a9cb6;box-shadow:0 1px 0 rgba(255,255,255,.8)"></div>
<svg class="i" style="left:1105.5px;top:697.8px" width="166" height="16" viewBox="0 0 166 16">
<defs><linearGradient id="zb" x1="0" y1="0" x2="0" y2="1"><stop offset="0" stop-color="#ffffff"/><stop offset="1" stop-color="#dfe6f0"/></linearGradient></defs>
<ellipse cx="10.4" cy="7.8" rx="9.8" ry="7.2" fill="url(#zb)" stroke="#5e6b7e" stroke-width="1.1"/>
<rect x="5.6" y="7" width="9.6" height="1.8" fill="#2c3440"/>
<ellipse cx="154.8" cy="7.8" rx="9.8" ry="7.2" fill="url(#zb)" stroke="#5e6b7e" stroke-width="1.1"/>
<rect x="150" y="7" width="9.6" height="1.8" fill="#2c3440"/><rect x="153.8" y="3.6" width="2" height="8.6" fill="#2c3440"/>
<path d="M77.6 1.6H88V8.4L82.8 12.6L77.6 8.4Z" fill="url(#zb)" stroke="#5e6b7e" stroke-width="1" stroke-linejoin="round"/>
</svg>

<span class="t" style="left:28.0px;top:37.0px;font-size:10.6px;color:#fff;transform:scaleX(1.288);font-weight:bold">File</span>
<span class="t" style="left:95.6px;top:37.0px;font-size:10.6px;color:#1e395b;transform:scaleX(1.329);">Home</span>
<span class="t" style="left:166.4px;top:37.0px;font-size:10.6px;color:#1e395b;transform:scaleX(1.419);">Insert</span>
<span class="t" style="left:237.8px;top:37.0px;font-size:10.6px;color:#1e395b;transform:scaleX(1.310);">Page Layout</span>
<span class="t" style="left:349.6px;top:37.0px;font-size:10.6px;color:#1e395b;transform:scaleX(1.288);">References</span>
<span class="t" style="left:453.3px;top:37.0px;font-size:10.6px;color:#1e395b;transform:scaleX(1.429);">Mailings</span>
<span class="t" style="left:542.8px;top:37.0px;font-size:10.6px;color:#1e395b;transform:scaleX(1.329);">Review</span>
<span class="t" style="left:621.9px;top:37.0px;font-size:10.6px;color:#1e395b;transform:scaleX(1.442);">View</span>
<span class="t" style="left:687.7px;top:37.0px;font-size:10.6px;color:#1e395b;transform:scaleX(1.392);">Add-Ins</span>
<span class="t" style="left:530.1px;top:11.7px;font-size:12.5px;color:#6b7d94;transform:scaleX(1.326);">Document2&nbsp; -&nbsp; Microsoft Word</span>
<span class="t" style="left:20.6px;top:93.8px;font-size:10.6px;color:#1e395b;transform:scaleX(1.281);">Paste</span>
<span class="t" style="left:8.4px;top:122.8px;font-size:10.6px;color:#3e5675;transform:scaleX(1.411);">Clipboard</span>
<span class="t" style="left:109.6px;top:68.4px;font-size:10.6px;color:#1c3a2a;transform:scaleX(1.288);">Times New Rom</span>
<span class="t" style="left:232.0px;top:68.4px;font-size:10.6px;color:#1c3a2a;transform:scaleX(1.229);">12</span>
<span class="t" style="left:240.5px;top:122.8px;font-size:10.6px;color:#3e5675;transform:scaleX(1.430);">Font</span>
<span class="t" style="left:530.6px;top:122.8px;font-size:10.6px;color:#3e5675;transform:scaleX(1.348);">Paragraph</span>
<span class="t" style="left:911.6px;top:122.8px;font-size:10.6px;color:#3e5675;transform:scaleX(1.253);">Styles</span>
<span class="t" style="left:1190.5px;top:122.8px;font-size:10.6px;color:#3e5675;transform:scaleX(1.436);">Editing</span>
<span class="t" style="left:740.2px;top:96.6px;font-size:10.6px;color:#1e395b;transform:scaleX(1.350);">¶ Normal</span>
<span class="t" style="left:819.6px;top:96.6px;font-size:10.6px;color:#1e395b;transform:scaleX(1.313);">¶ No Spaci...</span>
<span class="t" style="left:915.0px;top:96.6px;font-size:10.6px;color:#1e395b;transform:scaleX(1.367);">Heading 1</span>
<span class="t" style="left:1023.4px;top:96.6px;font-size:10.6px;color:#1e395b;transform:scaleX(1.422);">Title</span>
<span class="t serif" style="left:734.3px;top:72.3px;font-size:14.6px;color:#111;transform:scaleX(1.306);">AaBbCcI</span>
<span class="t serif" style="left:823.4px;top:72.3px;font-size:14.6px;color:#111;transform:scaleX(1.310);">AaBbCcI</span>
<span class="t" style="left:1108.6px;top:94.0px;font-size:10.6px;color:#1e395b;transform:scaleX(1.359);">Change</span>
<span class="t" style="left:1109.9px;top:106.4px;font-size:10.6px;color:#1e395b;transform:scaleX(1.176);">Styles</span>
<span class="t" style="left:1200.5px;top:61.2px;font-size:10.6px;color:#1e395b;transform:scaleX(1.407);">Find</span>
<span class="t" style="left:1200.5px;top:82.8px;font-size:10.6px;color:#1e395b;transform:scaleX(1.284);">Replace</span>
<span class="t" style="left:1200.5px;top:103.4px;font-size:10.6px;color:#1e395b;transform:scaleX(1.298);">Select</span>
<span class="t serif" style="left:114.9px;top:95.0px;font-size:13px;color:#111;transform:scaleX(1.349);font-weight:bold">B</span>
<span class="t serif" style="left:144.5px;top:95.0px;font-size:13px;color:#111;transform:scaleX(2.015);font-weight:bold;font-style:italic">I</span>
<span class="t serif" style="left:173.7px;top:95.2px;font-size:12px;color:#111;transform:scaleX(1.303);font-weight:bold">U</span>
<span class="t serif" style="left:212.9px;top:95.1px;font-size:12.5px;color:#222;transform:scaleX(1.083);font-weight:bold;text-decoration:line-through">abc</span>
<span class="t" style="left:245.4px;top:93.7px;font-size:15px;color:#111;transform:scaleX(1.079);font-weight:bold">x</span>
<span class="t" style="left:256.0px;top:102.6px;font-size:6.5px;color:#2a5db0;transform:scaleX(1.297);font-weight:bold">2</span>
<span class="t" style="left:274.0px;top:93.5px;font-size:15px;color:#111;transform:scaleX(1.199);font-weight:bold">x</span>
<span class="t" style="left:286.0px;top:95.4px;font-size:6.5px;color:#2a5db0;transform:scaleX(0.938);font-weight:bold">2</span>
<span class="t serif" style="left:287.9px;top:66.3px;font-size:16px;color:#111;transform:scaleX(1.176);font-weight:bold">A</span>
<span class="t serif" style="left:316.0px;top:70.3px;font-size:11.5px;color:#111;transform:scaleX(1.131);font-weight:bold">A</span>
<span class="t serif" style="left:354.3px;top:66.9px;font-size:14px;color:#111;transform:scaleX(1.069);font-weight:bold">Aa</span>
<span class="t" style="left:349.7px;top:93.6px;font-size:9.5px;color:#5e5e12;transform:scaleX(1.019);font-weight:bold">ab</span>
<span class="t serif" style="left:395.7px;top:92.0px;font-size:15px;color:#1f3f8a;transform:scaleX(1.208);font-weight:bold">A</span>
<span class="t" style="left:691.1px;top:66.8px;font-size:13.6px;color:#111;transform:scaleX(1.547);font-weight:bold">¶</span>
<div class="abs" style="z-index:5;overflow:hidden;left:909.5px;top:64.2px;width:76.10000000000002px;height:31.799999999999997px"><span class="t serif" style="left:3.6px;top:6.8px;font-size:18.3px;color:#365f91;transform:scaleX(1.172);font-weight:bold">AaBbCc</span></div>
<div class="abs" style="z-index:5;overflow:hidden;left:999px;top:67.4px;width:79px;height:28.599999999999994px"><span class="t serif" style="left:3.0px;top:-9.7px;font-size:33.5px;color:#17365d;transform:scaleX(1.166);">AaB</span></div>
<span class="t" style="left:14.4px;top:700.1px;font-size:10.6px;color:#1e395b;transform:scaleX(1.300);">Page: 1 of 1</span>
<span class="t" style="left:112.0px;top:700.1px;font-size:10.6px;color:#1e395b;transform:scaleX(1.383);">Words: 0</span>
<span class="t" style="left:1062.4px;top:700.3px;font-size:10.6px;color:#1e395b;transform:scaleX(1.284);">100%</span>
<div class="bk" style="left:0;top:0;width:1280px;height:4px"></div>
<div class="bk" style="left:0;top:716px;width:1280px;height:4px"></div>
<div class="bk" style="left:0;top:0;width:5px;height:720px"></div>
<div class="bk" style="left:1275px;top:0;width:5px;height:720px"></div>
</div>
</body></html>
